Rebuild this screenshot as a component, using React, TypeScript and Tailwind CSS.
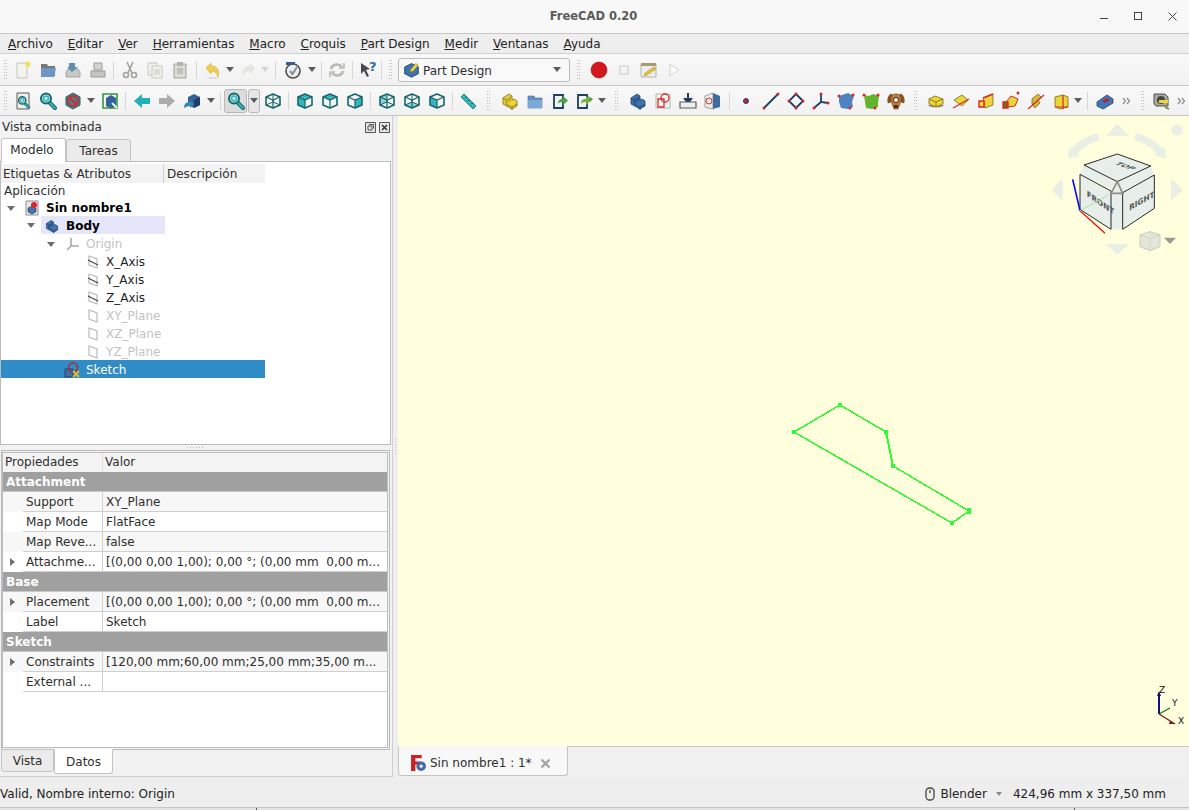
import React from "react";

const Svg = ({ children }: { children: React.ReactNode }) => (
    <svg viewBox="0 0 20 20" className="w-[20px] h-[20px] shrink-0">
        {children}
    </svg>
);

const T = "#37b5bd";
const TD = "#17666c";
const B = "#3f74ad";
const BD = "#1d3f66";
const Y = "#ecd53a";
const YD = "#7a6a10";
const R = "#d8262b";

const Mag = ({ x = 0, y = 0, s = 1 }: { x?: number; y?: number; s?: number }) => (
    <g transform={`translate(${x} ${y}) scale(${s})`}>
        <path d="M11 11l6 6" stroke={TD} strokeWidth="4" strokeLinecap="round" />
        <path d="M11 11l6 6" stroke={T} strokeWidth="2" strokeLinecap="round" />
        <circle cx="8" cy="7.500" r="5" fill="#bfe9ec" stroke={TD} strokeWidth="2" />
        <circle cx="8" cy="7.500" r="2.500" fill="none" stroke={T} strokeWidth="1.500" />
    </g>
);

// wire cube with one highlighted face
const Cube = ({ face }: { face?: "front" | "top" | "right" | "rear" | "bottom" | "left" | "iso" }) => (
    <>
        {face === "front" && <path d="M3 6l7-3 7 3v0l-7 3z M3 6l7 3v8l-7-3z" fill={T} />}
        {face === "top" && <path d="M3 6l7-3 7 3-7 3z" fill={T} />}
        {face === "right" && <path d="M10 9l7-3v8l-7 3z" fill={T} />}
        {face === "rear" && <path d="M3 6l7-3v8l-7 3z" fill={T} opacity=".55" />}
        {face === "bottom" && <path d="M3 14l7-3 7 3-7 3z" fill={T} opacity=".55" />}
        {face === "left" && <path d="M3 6l7 3v8l-7-3z" fill={T} />}
        <path d="M3 6l7-3 7 3v8l-7 3-7-3z" fill="none" stroke={TD} strokeWidth="1.600" strokeLinejoin="round" />
        <path d="M3 6l7 3 7-3M10 9v8" fill="none" stroke={TD} strokeWidth="1.200" />
        {(face === "iso" || face === "rear" || face === "bottom") && (
            <path d="M3 14l7-3 7 3M10 3v8" fill="none" stroke={TD} strokeWidth="1" />
        )}
    </>
);

const Vertex = ({ x, y }: { x: number; y: number }) => <circle cx={x} cy={y} r="1.500" fill={R} />;

// stepped bracket used by the part and body icons
const Bracket = ({ c, d, l }: { c: string; d: string; l: string }) => (
    <>
        <path d="M3 7l6-4 3 2v4l2-1 3 2v5l-5 3-9-5z" fill={c} stroke={d} strokeWidth=".8" strokeLinejoin="round" />
        <path d="M3 7l3 2 6-4M6 9v4l6 3 5-3M12 16v3" fill="none" stroke={d} strokeWidth=".8" />
        <path d="M6 9l6-4v4l-6 4z" fill={l} />
    </>
);

const Solid = ({ c = Y, d = YD }: { c?: string; d?: string }) => (
    <>
        <path d="M3 8l6-3 8 3v5l-7 3-7-3z" fill={c} stroke={d} strokeWidth=".8" />
        <path d="M3 8l7 3 7-3M10 11v5" fill="none" stroke={d} strokeWidth=".8" />
    </>
);

const Folder = () => (
    <>
        <path d="M3 5h6l1 2h7v10H3z" fill="#5f8fc5" stroke="#46709f" strokeWidth=".6" />
        <path d="M3 9h14v8H3z" fill="#7ea8d8" />
    </>
);

const icons: Record<string, React.ReactNode> = {
    new: (
        <>
            <path d="M4 3h10v15H4z" fill="#f4f4ee" stroke="#c4c4bd" />
            <circle cx="15" cy="4" r="2.600" fill="#f5e04e" />
        </>
    ),
    open: (
        <>
            <path d="M3 4h6l1 2h7v10H3z" fill="#77787a" />
            <path d="M3 8h15l-2 9H3z" fill="#7096c6" />
        </>
    ),
    save: (
        <>
            <path d="M3 12l2-3h10l2 3v5H3z" fill="#c7c7c3" stroke="#97978f" strokeWidth=".8" />
            <path d="M6 3h6v4h3l-6 5-5-5h2z" fill="#5f8fb0" />
        </>
    ),
    saveas: (
        <>
            <path d="M6 3h8v7H6z" fill="#d3d3d0" stroke="#9d9d98" />
            <path d="M3 11h14v6H3z" fill="#c4c4c0" stroke="#9d9d98" />
        </>
    ),
    cut: (
        <g stroke="#a3a39c" fill="none" strokeWidth="1.600">
            <path d="M7 2l5 11M13 2l-5 11" />
            <circle cx="6" cy="15" r="2.500" />
            <circle cx="14" cy="15" r="2.500" />
        </g>
    ),
    copy: (
        <g fill="#f1f1ee" stroke="#c6c6c0">
            <path d="M3 3h9v12H3z" />
            <path d="M7 6h10v12H7z" />
            <path d="M9 10h6M9 12h6M9 14h6" />
        </g>
    ),
    paste: (
        <>
            <path d="M4 4h12v14H4z" fill="#ddddd8" stroke="#a3a39c" />
            <path d="M7 2h6v4H7z" fill="#b4b4ad" />
            <path d="M7 9h6M7 11h6M7 13h6" stroke="#a3a39c" />
        </>
    ),
    undo: (
        <>
            <path d="M3 8l5-5v3c6 0 9 4 7 11-1-4-3-6-7-6v3z" fill="#f0cf4c" stroke="#d0aa22" strokeWidth=".6" />
            <ellipse cx="10" cy="18" rx="6" ry="1" fill="#ddd" />
        </>
    ),
    redo: <path d="M17 8l-5-5v3C6 6 3 10 5 17c1-4 3-6 7-6v3z" fill="#e4e4e0" />,
    clock: (
        <>
            <circle cx="10" cy="11" r="7" fill="#eeeeee" stroke="#4d4d4d" strokeWidth="1.600" />
            <path d="M7 11l2.500 3L14 7" fill="none" stroke="#7d8d99" strokeWidth="2" />
            <path d="M3 2h9v3H3z" fill="#33608f" />
        </>
    ),
    refresh: (
        <g fill="none" stroke="#b9b9b4" strokeWidth="2.600">
            <path d="M4 9c1-5 8-6 11-2" />
            <path d="M16 11c-1 5-8 6-11 2" />
            <path d="M12 8l5 0 0-5M8 12l-5 0 0 5" strokeWidth="1.600" />
        </g>
    ),
    what: (
        <>
            <path d="M3 3l9 6-4 1 3 6-2 1-3-6-3 3z" fill="#49494f" />
            <text x="11" y="11" fontSize="13" fontWeight="700" fill="#2f6ca6" fontFamily="DejaVu Sans">?</text>
        </>
    ),
    record: <circle cx="10" cy="10" r="8" fill="#d4161d" stroke="#a81016" strokeWidth=".6" />,
    stop: <path d="M6 6h8v8H6z" fill="#f5f5f3" stroke="#c8c8c4" />,
    edit: (
        <>
            <path d="M2 4h15v13H2z" fill="#eeeeea" stroke="#b4b4ae" />
            <path d="M2 3h15v3H2z" fill="#a99a76" />
            <path d="M6 13l9-6 2 2-9 6-3 1z" fill="#e6bf46" stroke="#a7862a" strokeWidth=".5" />
        </>
    ),
    play: <path d="M6 4l9 6-9 6z" fill="#fafaf8" stroke="#cfd6da" />,
    fitall: (
        <>
            <path d="M4 2h12v16H4z" fill="#efefea" stroke="#5c5c5c" />
            <Mag x={3.500} y={4} s={0.720} />
        </>
    ),
    fitsel: <Mag />,
    nodraw: (
        <>
            <path d="M10 2l7 4v8l-7 4-7-4V6z" fill="#43858c" stroke={TD} />
            <circle cx="10" cy="10" r="5" fill="none" stroke={R} strokeWidth="2" />
            <path d="M6.500 6.500l7 7" stroke={R} strokeWidth="2" />
        </>
    ),
    boxsel: (
        <>
            <path d="M6 7l5-3 5 3v8l-5 3-5-3z" fill="#34619a" />
            <path d="M3 3h14v14H3z" fill="none" stroke="#2f9a3a" strokeWidth="1.600" />
            <path d="M12 12l5 5" stroke="#eee" strokeWidth="2" />
        </>
    ),
    back: <path d="M2 10l8-7v4h8v6h-8v4z" fill="#1fb0b8" />,
    fwd: <path d="M18 10l-8-7v4H2v6h8v4z" fill="#a9aca9" />,
    link: (
        <>
            <path d="M6 6l6-3 6 3v8l-6 3-6-3z" fill="#34619a" />
            <path d="M12 9v8l6-3V6z" fill={BD} />
            <path d="M2 17c0-4 2-6 6-6V9l4 4-4 4v-2c-3 0-4 1-6 2z" fill="#2f8ab0" />
        </>
    ),
    iso: <Cube face="iso" />,
    front: <Cube face="front" />,
    top: <Cube face="top" />,
    right: <Cube face="right" />,
    rear: <Cube face="rear" />,
    bottom: <Cube face="bottom" />,
    left: <Cube face="left" />,
    ruler: (
        <>
            <path d="M3 6l3-3 12 12-3 3z" fill="#30b8c0" stroke={TD} strokeWidth=".8" />
            <path d="M7 7l2-1M10 10l2-1M13 13l2-1" stroke={TD} />
        </>
    ),
    part: <Bracket c={Y} d={YD} l="#c8b02a" />,
    folder: <Folder />,
    linkgo: (
        <>
            <path d="M4 4h9v13H4z" fill="#eef2f5" stroke={BD} strokeWidth="1.800" />
            <path d="M8 13c0-4 2-5 5-5V5l5 4.500-5 4.500v-3c-2 0-4 0-5 2z" fill="#4ca23a" />
        </>
    ),
    linkgo2: (
        <>
            <path d="M3 4h9v13H3z" fill="#eef2f5" stroke={BD} strokeWidth="1.800" />
            <path d="M6 13c0-4 2-5 5-5V5l5 4.500-5 4.500v-3c-2 0-4 0-5 2z" fill="#79ae3c" />
            <path d="M13 5l5 3-3 3z" fill="#4ca23a" />
        </>
    ),
    body: <Bracket c={B} d={BD} l="#2e5a8e" />,
    sketch: (
        <>
            <path d="M3 3h14v14H3z" fill="#f3f3ef" stroke="#b2b2ac" />
            <path d="M5 8h6v8H5z" fill="none" stroke="#d3322f" strokeWidth="1.300" />
            <circle cx="12" cy="7" r="4" fill="none" stroke="#d3322f" strokeWidth="1.300" />
        </>
    ),
    attach: (
        <>
            <path d="M10 2v6h3l-3 4-3-4h3" fill={BD} stroke={BD} strokeWidth="2" />
            <path d="M2 11h16v6H2z" fill="#eeeeea" stroke="#5a5a5a" strokeWidth="1.200" />
        </>
    ),
    validate: (
        <>
            <path d="M2 5l8-3v16l-8-2z" fill="#eeeeea" stroke="#9f9f9a" />
            <path d="M10 2l7 3v11l-7 2z" fill="#3c6ca0" />
            <circle cx="6" cy="10" r="3" fill="none" stroke="#d3322f" />
        </>
    ),
    point: <circle cx="10" cy="10" r="2.500" fill="#c8262b" stroke="#1e3f78" strokeWidth="1" />,
    line: (
        <>
            <path d="M3 17L17 3" stroke={BD} strokeWidth="1.800" />
            <Vertex x={3} y={17} />
            <Vertex x={17} y={3} />
        </>
    ),
    diamond: (
        <>
            <path d="M10 3l7 7-7 7-7-7z" fill="none" stroke={BD} strokeWidth="1.800" />
            <Vertex x={10} y={3} />
            <Vertex x={17} y={10} />
            <Vertex x={10} y={17} />
            <Vertex x={3} y={10} />
        </>
    ),
    axes: (
        <>
            <path d="M10 3v8l7 1M10 11l-7 6" fill="none" stroke={BD} strokeWidth="1.800" />
            <Vertex x={10} y={3} />
            <Vertex x={17} y={12} />
            <Vertex x={3} y={17} />
        </>
    ),
    blueface: (
        <>
            <path d="M3 5l9-3 6 3-2 6 1 5-5 2-7-1-2-6z" fill="#4f83bf" />
            <Vertex x={3} y={5} />
            <Vertex x={17} y={4} />
            <Vertex x={14} y={17} />
        </>
    ),
    greenface: (
        <>
            <path d="M3 4l5 1 4-2 6 2-1 7 0 4-6 2-6-1-1-6z" fill="#63b32c" />
            <Vertex x={3} y={4} />
            <Vertex x={17} y={4} />
            <Vertex x={14} y={17} />
        </>
    ),
    face: (
        <>
            <path d="M6 3C3 3 1 7 2 12l3-1zM14 3c3 0 5 4 4 9l-3-1z" fill="#8d5524" stroke="#5a3412" strokeWidth=".5" />
            <path d="M5 8c0-4 2-5 5-5s5 1 5 5l-1 5-2 5H8l-2-5z" fill="#c77a36" stroke="#6b3d16" strokeWidth=".6" />
            <circle cx="10" cy="9" r="2.500" fill="#fff" stroke="#3b2410" />
            <path d="M8 14h4v3H8z" fill="#532e12" />
        </>
    ),
    pad: (
        <>
            <path d="M3 14c0 2 14 2 14 0" fill="none" stroke="#8a8a8a" strokeWidth="1.600" />
            <Solid />
        </>
    ),
    revolve: (
        <>
            <path d="M3 9l8-5 6 5-6 6z" fill={Y} stroke={YD} strokeWidth=".8" />
            <path d="M2 17L18 8" stroke={R} strokeWidth="1.200" />
        </>
    ),
    loft: (
        <>
            <path d="M7 7l10-4v11l-8 3z" fill={Y} stroke={YD} strokeWidth=".8" />
            <path d="M7 7l10-4" stroke={R} strokeWidth="1.400" />
            <path d="M3 10h5v6H3z" fill={Y} stroke={R} strokeWidth="1.400" />
        </>
    ),
    pipe: (
        <>
            <path d="M5 11l5-6 7 3-3 7-8 1z" fill={Y} stroke={R} strokeWidth="1" />
            <path d="M2 11h5v6H2z" fill={YD} stroke={R} strokeWidth="1.300" />
            <Vertex x={17} y={2} />
        </>
    ),
    helix: (
        <>
            <path d="M6 8l6-5 3 3-3 3 2 3-5 5-3-4z" fill="#d9b93a" stroke={YD} strokeWidth=".8" />
            <path d="M2 18L18 4" stroke={R} strokeWidth="1.200" />
        </>
    ),
    prim: (
        <>
            <path d="M4 6l8-2 5 2v10l-8 2-5-2z" fill={Y} stroke={YD} strokeWidth=".8" />
            <path d="M12 4v14M4 16h13" stroke={R} strokeWidth="1.200" />
        </>
    ),
    pocket: (
        <>
            <path d="M2 11l10-7 6 4v4l-10 6-6-3z" fill="#3f77b8" stroke={BD} strokeWidth=".8" />
            <path d="M7 10l5-3 3 2-5 3z" fill="#b4272a" />
        </>
    ),
    tape: (
        <>
            <path d="M3 3h11l3 3v9H5l-2-2z" fill="#a9a9a2" stroke="#50504c" />
            <circle cx="10" cy="9" r="4" fill="#45453f" />
            <path d="M8 9h9v3H8z" fill={Y} />
            <path d="M14 16l4 2" stroke="#8a8030" strokeWidth="1.600" />
        </>
    ),
};

const Arrow = ({ light }: { light?: boolean }) => (
    <svg viewBox="0 0 8 5" className="w-[8px] h-[5px]">
        <path d="M0 0h8L4 5z" fill={light ? "#d4d4d0" : "#5c5c5c"} />
    </svg>
);

const Chevrons = () => (
    <svg viewBox="0 0 9 8" className="w-[9px] h-[8px]">
        <path d="M1 1l2.500 3L1 7M5 1l2.500 3L5 7" fill="none" stroke="#8c8c8c" strokeWidth="1.200" />
    </svg>
);

const Grip = () => (
    <div className="grid grid-cols-2 gap-x-[1px] gap-y-[2px] w-[3px]">
        {[0, 1, 2, 3, 4, 5, 6, 7, 8, 9, 10, 11, 12, 13].map((i) => (
            <span key={i} className="w-[1px] h-[1px] bg-[#bdbdbd]" />
        ))}
    </div>
);

type Item =
    | { k: "i"; n: string; w?: string }
    | { k: "d"; w: string; light?: boolean }
    | { k: "s"; w: string }
    | { k: "g"; w: string }
    | { k: "c"; w: string }
    | { k: "p" }
    | { k: "pd" }
    | { k: "combo" };

const ToolItem = ({ it }: { it: Item }) => {
    const cell = "flex items-center justify-center shrink-0 h-full";
    if (it.k === "i") {
        return <div className={`${cell} ${it.w ?? "w-[25px]"}`}><Svg>{icons[it.n]}</Svg></div>;
    }
    if (it.k === "d") {
        return <div className={`${cell} ${it.w}`}><Arrow light={it.light} /></div>;
    }
    if (it.k === "s") {
        return <div className={`${cell} ${it.w}`}><span className="w-[1px] h-[18px] bg-[#d6d6d6]" /></div>;
    }
    if (it.k === "g") {
        return <div className={`${cell} ${it.w}`}><Grip /></div>;
    }
    if (it.k === "c") {
        return <div className={`${cell} ${it.w}`}><Chevrons /></div>;
    }
    if (it.k === "p") {
        return (
            <div className={`${cell} w-[25px]`}>
                <div className="w-[23px] h-[24px] flex items-center justify-center rounded-[3px] bg-[#dcdcdc] border border-[#b8b8b8]">
                    <Svg><Mag /></Svg>
                </div>
            </div>
        );
    }
    if (it.k === "pd") {
        return (
            <div className={`${cell} w-[12px]`}>
                <div className="w-[12px] h-[24px] flex items-center justify-center rounded-[3px] bg-[#e6e6e6] border border-[#b8b8b8]">
                    <Arrow />
                </div>
            </div>
        );
    }
    return (
        <div className={`${cell} w-[172px]`}>
            <div className="w-[172px] h-[24px] flex items-center pl-[4px] pr-[8px] gap-[3px] rounded-[3px] border border-[#bcbcbc] bg-[#f9f9f9] text-[#2e2e2e]">
                <svg viewBox="0 0 20 20" className="w-[17px] h-[17px]">
                    <path d="M2 7l8-4 8 4v8l-8 4-8-4z" fill={B} stroke={BD} />
                    <path d="M9 10l6-7 3 2-6 7-4 1z" fill={Y} stroke={YD} strokeWidth=".6" />
                </svg>
                <span className="flex-1 pt-[2px]">Part Design</span>
                <Arrow />
            </div>
        </div>
    );
};

const i = (n: string, w?: string): Item => ({ k: "i", n, w });
const d = (w: string, light?: boolean): Item => ({ k: "d", w, light });
const s = (w: string): Item => ({ k: "s", w });
const g = (w: string): Item => ({ k: "g", w });
const c = (w: string): Item => ({ k: "c", w });

const row1: Item[] = [
    g("w-[10px]"), i("new"), i("open"), i("save"), i("saveas"), s("w-[7px]"), i("cut"), i("copy"), i("paste"),
    s("w-[8px]"), i("undo"), d("w-[10px]"), i("redo"), d("w-[10px]", true), s("w-[10px]"), i("clock"), d("w-[14px]"),
    s("w-[5px]"), i("refresh"), s("w-[6px]"), i("what"), s("w-[3px]"), g("w-[15px]"), { k: "combo" }, g("w-[16px]"),
    i("record"), i("stop"), i("edit"), i("play"),
];

const row2: Item[] = [
    g("w-[10px]"), i("fitall"), i("fitsel"), i("nodraw"), d("w-[12px]"), i("boxsel"), s("w-[7px]"), i("back"), i("fwd"),
    i("link"), d("w-[14px]"), s("w-[5px]"), { k: "p" }, { k: "pd" }, i("iso"), s("w-[7px]"), i("front"), i("top"), i("right"),
    s("w-[7px]"), i("rear"), i("bottom"), i("left"), s("w-[6px]"), i("ruler"), g("w-[17px]"), i("part"), i("folder"),
    i("linkgo"), i("linkgo2"), d("w-[10px]"), g("w-[18px]"), i("body"), i("sketch"), i("attach"), i("validate"),
    s("w-[8px]"), i("point"), i("line"), i("diamond"), i("axes"), i("blueface"), i("greenface"), i("face"),
    g("w-[15px]"), i("pad"), i("revolve"), i("loft"), i("pipe"), i("helix"), i("prim"), d("w-[10px]"), s("w-[9px]"),
    i("pocket"), c("w-[19px]"), g("w-[12px]"), i("tape"), c("w-[16px]"),
];

const menus = [
    ["A", "rchivo"], ["E", "ditar"], ["V", "er"], ["H", "erramientas"], ["M", "acro"],
    ["C", "roquis"], ["P", "art Design"], ["M", "edir"], ["V", "entanas"], ["A", "yuda"],
];

const TreeArrow = () => (
    <svg viewBox="0 0 8 5" className="w-[8px] h-[5px] shrink-0">
        <path d="M0 0h8L4 5z" fill="#6e6e6e" />
    </svg>
);

const RightArrow = () => (
    <svg viewBox="0 0 5 8" className="w-[5px] h-[8px]">
        <path d="M0 0l5 4-5 4z" fill="#6e6e6e" />
    </svg>
);

const Plane = ({ axis }: { axis?: boolean }) => (
    <svg viewBox="0 0 12 14" className="w-[12px] h-[14px] shrink-0">
        <path d="M2 1l8 3v9l-8-3z" fill="#fff" stroke="#b9b9b9" strokeWidth="1.200" />
        {axis && <path d="M1 5l10 5" stroke="#444" strokeWidth="1.200" />}
    </svg>
);

const planes = [
    { n: "X_Axis", axis: true },
    { n: "Y_Axis", axis: true },
    { n: "Z_Axis", axis: true },
    { n: "XY_Plane" },
    { n: "XZ_Plane" },
    { n: "YZ_Plane" },
];

function ModelTree() {
    return (
        <div className="h-[284px] shrink-0 border border-[#bcbcbc] mr-[1px] bg-white flex flex-col">
            <div className="h-[19px] shrink-0 mt-[2px] flex bg-[#f3f3f3] w-[264px]">
                <div className="w-[163px] pl-[2px] border-r border-[#d0d0d0] leading-[21px]">Etiquetas &amp; Atributos</div>
                <div className="flex-1 pl-[3px] leading-[21px]">Descripción</div>
            </div>
            <div className="h-[15px] shrink-0 pl-[3px] leading-[16px]">Aplicación</div>
            <div className="h-[18px] shrink-0 w-[264px] flex items-center pl-[6px] pt-[2px]">
                <TreeArrow />
                <svg viewBox="0 0 14 16" className="w-[14px] h-[16px] ml-[10px] shrink-0">
                    <path d="M1 1h12v14H1z" fill="#e9e9e6" stroke="#8f8f8f" />
                    <path d="M3 8l4-2 4 2v4l-4 2-4-2z" fill={B} stroke={BD} strokeWidth=".6" />
                    <circle cx="9" cy="5" r="3" fill={R} />
                </svg>
                <span className="ml-[7px] font-bold text-black">Sin nombre1</span>
            </div>
            <div className="h-[18px] shrink-0 w-[264px] flex items-center pl-[26px]">
                <TreeArrow />
                <div className="ml-[6px] pl-[3px] pt-[2px] w-[124px] h-[18px] flex items-center bg-[#e6e6fa]">
                    <svg viewBox="0 0 20 20" className="w-[16px] h-[16px] shrink-0">
                        <Bracket c={B} d={BD} l="#2e5a8e" />
                    </svg>
                    <span className="ml-[6px] font-bold text-black">Body</span>
                </div>
            </div>
            <div className="h-[18px] shrink-0 w-[264px] flex items-center pl-[46px] pt-[2px]">
                <TreeArrow />
                <svg viewBox="0 0 14 14" className="w-[14px] h-[14px] ml-[11px] shrink-0">
                    <path d="M5 1v8h8M5 9l-4 4" fill="none" stroke="#a8a8a8" strokeWidth="1.600" />
                </svg>
                <span className="ml-[6px] text-[#c3c3c3]">Origin</span>
            </div>
            {planes.map((p) => (
                <div key={p.n} className="h-[18px] shrink-0 w-[264px] flex items-center pl-[86px] pt-[2px]">
                    <Plane axis={p.axis} />
                    <span className={`ml-[7px] ${p.axis ? "text-[#1f1f1f]" : "text-[#c3c3c3]"}`}>{p.n}</span>
                </div>
            ))}
            <div className="h-[18px] shrink-0 w-[264px] flex items-center pl-[63px] pt-[2px] bg-[#308cc6] text-white">
                <svg viewBox="0 0 18 16" className="w-[18px] h-[16px] shrink-0">
                    <path d="M1 7h8v8H1z" fill="#3a6ea8" stroke="#2c3f70" />
                    <circle cx="9" cy="5.500" r="4.500" fill="none" stroke="#b0262b" strokeWidth="1.400" />
                    <path d="M9 9l6 6M15 9l-6 6" stroke="#d8bb33" strokeWidth="2" />
                </svg>
                <span className="ml-[4px]">Sketch</span>
            </div>
        </div>
    );
}

const PropGroup = ({ label }: { label: string }) => (
    <div className="h-[20px] shrink-0 bg-[#a0a0a0] text-white font-bold pl-[3px] leading-[20px] border-b border-[#c8c8c8]">{label}</div>
);

const PropRow = ({ name, value, alt, expand }: { name: string; value: string; alt?: boolean; expand?: boolean }) => (
    <div className="h-[20px] shrink-0 flex">
        <div className={`w-[20px] shrink-0 flex items-center justify-center pr-[2px] ${alt ? "bg-[#f7f7f7]" : "bg-white"}`}>
            {expand && <RightArrow />}
        </div>
        <div className={`flex-1 flex min-w-0 border-b border-[#cfcfcf] ${alt ? "bg-[#f7f7f7]" : "bg-white"}`}>
            <div className="w-[80px] shrink-0 pl-[3px] leading-[20px] border-r border-[#cfcfcf]">{name}</div>
            <div className="flex-1 pl-[3px] leading-[20px] whitespace-pre overflow-hidden">{value}</div>
        </div>
    </div>
);

function PropertyPanel() {
    return (
        <div className="h-[300px] shrink-0 mr-[2px] ml-[1px] border border-[#bcbcbc] p-[1px] pl-0">
            <div className="h-full border border-[#bcbcbc] bg-white flex flex-col">
                <div className="h-[19px] shrink-0 flex bg-[#f3f3f3]">
                    <div className="w-[100px] shrink-0 pl-[2px] leading-[18px] border-r border-[#dcdcdc]">Propiedades</div>
                    <div className="flex-1 pl-[2px] leading-[18px]">Valor</div>
                </div>
                <PropGroup label="Attachment" />
                <PropRow name="Support" value="XY_Plane" alt />
                <PropRow name="Map Mode" value="FlatFace" />
                <PropRow name="Map Reve..." value="false" alt />
                <PropRow name="Attachme..." value="[(0,00 0,00 1,00); 0,00 °; (0,00 mm  0,00 m..." expand />
                <PropGroup label="Base" />
                <PropRow name="Placement" value="[(0,00 0,00 1,00); 0,00 °; (0,00 mm  0,00 m..." alt expand />
                <PropRow name="Label" value="Sketch" />
                <PropGroup label="Sketch" />
                <PropRow name="Constraints" value="[120,00 mm;60,00 mm;25,00 mm;35,00 m..." alt expand />
                <PropRow name="External ..." value="" />
            </div>
        </div>
    );
}

function SketchDrawing() {
    const pts = "794,432 840,405 886,432 893,466 969,511 952,523";
    return (
        <svg viewBox="398 116 791 630" className="absolute inset-0 w-[791px] h-[630px]" shapeRendering="crispEdges">
            <polygon points={pts} fill="none" stroke="#28ff2c" strokeWidth="1.500" />
            <path d="M886 432l7 34" stroke="#28ff2c" strokeWidth="2" />
            <path d="M792 430h4v4h-4zM838 403h4v4h-4zM884 430h4v4h-4zM891 464h4v4h-4zM967 508h4v6h-4zM950 521h4v4h-4z" fill="#28ff2c" />
        </svg>
    );
}

function NaviCube() {
    const soft = "#e9efe4";
    return (
        <svg viewBox="0 0 447 420" className="absolute top-[4px] right-0 w-[149px] h-[140px]">
            <g fill={soft}>
                <path d="M232 12l35 35h-70zM35 210l33-35v68zM428 210l-35-35v68zM232 405l-35-33h70z" />
                <path d="M85 115l2-32 6 4c20-22 45-38 80-48l6 22c-28 8-50 22-66 40l6 6z" />
                <path d="M378 115l-2-32-6 4c-20-22-45-38-82-48l-6 22c30 8 52 22 68 40l-6 6z" />
                <circle cx="411" cy="30" r="17" />
            </g>
            <path d="M120 163l12-28 100-33 100 36 11 27-95 53v110h-35V205z" fill="#e8eeea" />
            <path d="M120 268V163l93 50v115zM343 265V165l-95 53v110zM232 102l100 36-100 47-100-50z" fill="#e8eeea" stroke="#2a2a2a" strokeWidth="3" strokeLinejoin="round" />
            <path d="M232 185l-19 35h35z" fill="#e8eeea" stroke="#8e8e84" strokeWidth="5" />
            <text transform="matrix(.9 .62 0 1 140 228)" fontSize="24" fontWeight="700" fill="#555" fontFamily="DejaVu Sans">FRONT</text>
            <text transform="matrix(.9 -.5 0 1 268 272)" fontSize="24" fontWeight="700" fill="#555" fontFamily="DejaVu Sans">RIGHT</text>
            <text transform="matrix(.9 .3 -.9 .3 222 132)" fontSize="26" fontWeight="700" fill="#555" fontFamily="DejaVu Sans">TOP</text>
            <path d="M120 272L98 178" stroke="#0a0af0" strokeWidth="5" />
            <path d="M120 272L195 340" stroke="#f01010" strokeWidth="4" />
            <path d="M120 272L205 225" stroke="#9be89b" strokeWidth="3" />
            <path d="M300 345l30-10 30 10v35l-30 12-30-12z" fill="#e3e6d6" stroke="#c8cdc0" strokeWidth="3" />
            <path d="M300 345l30 10 30-10M330 355v37" fill="none" stroke="#cdd2c4" strokeWidth="2" />
            <path d="M372 353h36l-18 19z" fill="#9a9a90" />
        </svg>
    );
}

function AxisGizmo() {
    return (
        <svg viewBox="0 0 40 44" className="absolute right-0 bottom-[16px] w-[40px] h-[44px]">
            <path d="M10 28V10" stroke="#10107a" strokeWidth="2" />
            <path d="M8 10l2-5 2 5z" fill="#10107a" />
            <path d="M10 28l11-6" stroke="#137a13" strokeWidth="1.400" />
            <path d="M10 28l16 10" stroke="#7a1a1a" strokeWidth="1.400" />
            <path d="M21 35l5 3-6 0z" fill="#7a1a1a" />
            <text x="10" y="7" fontSize="9" fill="#111" fontFamily="DejaVu Sans">Z</text>
            <text x="23" y="20" fontSize="9" fill="#111" fontFamily="DejaVu Sans">Y</text>
            <text x="29" y="38" fontSize="9" fill="#111" fontFamily="DejaVu Sans">X</text>
        </svg>
    );
}

export default function App() {
    return (
        <div
            className="w-[1189px] h-[810px] overflow-hidden flex flex-col bg-[#efefef] text-[12px] leading-[16px] text-[#2e2e2e]"
            style={{ fontFamily: '"DejaVu Sans", sans-serif' }}
        >
            {/* title bar */}
            <div className="h-[34px] shrink-0 grid grid-cols-[1fr_auto_1fr] items-center bg-[#f8f8f8] border-b border-[#c6c6c6]">
                <div />
                <div className="font-bold text-[11.500px] text-[#5a5a5a] pb-[2px] pr-[2px]">FreeCAD 0.20</div>
                <div className="flex justify-end">
                    <div className="w-[34px] flex justify-center pt-[6px]"><span className="w-[8px] h-[1px] bg-[#444]" /></div>
                    <div className="w-[34px] flex justify-center"><span className="w-[8px] h-[8px] border border-[#444]" /></div>
                    <div className="w-[34px] flex justify-center">
                        <svg viewBox="0 0 9 9" className="w-[9px] h-[9px]">
                            <path d="M.5.5l8 8M8.500.5l-8 8" stroke="#444" />
                        </svg>
                    </div>
                </div>
            </div>

            {/* menu */}
            <div className="h-[20px] shrink-0 flex items-center gap-[14.900px] pl-[8px] bg-[#eeeeee] border-b border-[#d0d0d0] text-[#222]">
                {menus.map(([a, b], idx) => (
                    <span key={idx}><span className="underline">{a}</span>{b}</span>
                ))}
            </div>

            {/* toolbars */}
            <div className="h-[32px] shrink-0 flex items-center bg-gradient-to-b from-[#f9f9f9] to-[#f1f1f1] border-b border-[#c6c6c6]">
                {row1.map((it, idx) => <ToolItem key={idx} it={it} />)}
            </div>
            <div className="h-[30px] shrink-0 flex items-center bg-gradient-to-b from-[#f9f9f9] to-[#f1f1f1] border-b border-[#c6c6c6]">
                {row2.map((it, idx) => <ToolItem key={idx} it={it} />)}
            </div>

            <div className="h-[661px] shrink-0 flex">
                {/* left dock */}
                <div className="w-[393px] shrink-0 flex flex-col border-r border-b border-[#cfcfcf] bg-[#f2f2f2] h-[661px]">
                    <div className="h-[22px] shrink-0 flex items-center justify-between pl-[2px] pr-[2px]">
                        <span>Vista combinada</span>
                        <div className="flex gap-[3px]">
                            <svg viewBox="0 0 11 11" className="w-[11px] h-[11px]">
                                <path d="M.5.5h10v10H.5z" fill="#e6e6e6" stroke="#555" />
                                <path d="M3 4h4v4H3zM4 2.500h4.500v4" fill="none" stroke="#555" />
                            </svg>
                            <svg viewBox="0 0 11 11" className="w-[11px] h-[11px]">
                                <path d="M.5.5h10v10H.5z" fill="#e6e6e6" stroke="#555" />
                                <path d="M3 3l5 5M8 3l-5 5" stroke="#333" strokeWidth="1.500" />
                            </svg>
                        </div>
                    </div>
                    <div className="h-[24px] shrink-0 flex items-end pl-[1px] -mb-[1px]">
                        <div className="w-[65px] h-[24px] bg-white border border-b-0 border-[#c4c4c4] rounded-t-[3px] text-center pr-[3px] leading-[22px] z-10">Modelo</div>
                        <div className="w-[65px] h-[23px] bg-[#ebebeb] border border-[#c4c4c4] rounded-t-[3px] text-center leading-[23px]">Tareas</div>
                    </div>
                    <ModelTree />
                    <div className="h-[5px] shrink-0 flex items-center justify-center">
                        <span className="w-[18px] h-[1px] bg-[repeating-linear-gradient(90deg,#bbb_0,#bbb_1px,transparent_1px,transparent_3px)]" />
                    </div>
                    <PropertyPanel />
                    <div className="flex items-start pl-[1px] -mt-[1px]">
                        <div className="w-[53px] h-[23px] bg-[#ebebeb] border border-[#c4c4c4] rounded-b-[3px] text-center leading-[23px]">Vista</div>
                        <div className="w-[59px] h-[25px] bg-white border border-t-white border-[#c4c4c4] rounded-b-[3px] text-center leading-[25px]">Datos</div>
                    </div>
                </div>

                {/* splitter */}
                <div className="w-[5px] shrink-0 flex items-center justify-center">
                    <span className="w-[1px] h-[18px] bg-[repeating-linear-gradient(180deg,#bbb_0,#bbb_1px,transparent_1px,transparent_3px)]" />
                </div>

                {/* 3d view */}
                <div className="flex-1 flex flex-col min-w-0">
                    <div className="relative h-[630px] shrink-0 bg-[#ffffdd]">
                        <SketchDrawing />
                        <NaviCube />
                        <AxisGizmo />
                    </div>
                    <div className="flex-1 flex items-start border-t border-[#c6c6c6] bg-[#f0f0f0]">
                        <div className="w-[170px] h-[30px] -mt-[1px] pt-[5px] bg-[#f8f8f8] border border-t-0 border-[#c4c4c4] rounded-b-[3px] flex items-center pl-[11px]">
                            <svg viewBox="0 0 16 16" className="w-[17px] h-[17px] shrink-0">
                                <path d="M1 0h10v3H5v3h5v3H5v6H1z" fill="#cf1f25" />
                                <circle cx="10.500" cy="10.500" r="4.500" fill="#3d6eaa" />
                                <circle cx="10.500" cy="10.500" r="1.500" fill="#f0f0f0" />
                            </svg>
                            <span className="ml-[3px]">Sin nombre1 : 1*</span>
                            <svg viewBox="0 0 11 11" className="w-[11px] h-[11px] ml-[8px]">
                                <path d="M1.500 1.500l8 8M9.500 1.500l-8 8" stroke="#a2a2a2" strokeWidth="2.200" />
                            </svg>
                        </div>
                    </div>
                </div>
            </div>

            {/* status bar */}
            <div className="h-[30px] shrink-0 flex items-center justify-between bg-[#eeeeee] pt-[4px]">
                <span className="text-[#222]">Valid, Nombre interno: Origin</span>
                <div className="flex items-center pr-[23px] text-[#222]">
                    <svg viewBox="0 0 10 14" className="w-[10px] h-[14px] mr-[5px]">
                        <rect x="1" y="1" width="8" height="12" rx="3.500" fill="none" stroke="#444" strokeWidth="1.300" />
                        <path d="M5 3v3" stroke="#444" strokeWidth="1.300" />
                    </svg>
                    <span>Blender</span>
                    <span className="ml-[9px] mr-[11px]">
                        <svg viewBox="0 0 6 4" className="w-[6px] h-[4px]"><path d="M0 0h6L3 4z" fill="#8a8a8a" /></svg>
                    </span>
                    <span>424,96 mm x 337,50 mm</span>
                </div>
            </div>
            <div className="flex-1 flex border-t border-[#c6c6c6] bg-[#e4e4e4]">
                <div className="w-[257px] border-r border-[#555]" />
                <div className="w-[818px] border-r border-[#555]" />
            </div>
        </div>
    );
}
